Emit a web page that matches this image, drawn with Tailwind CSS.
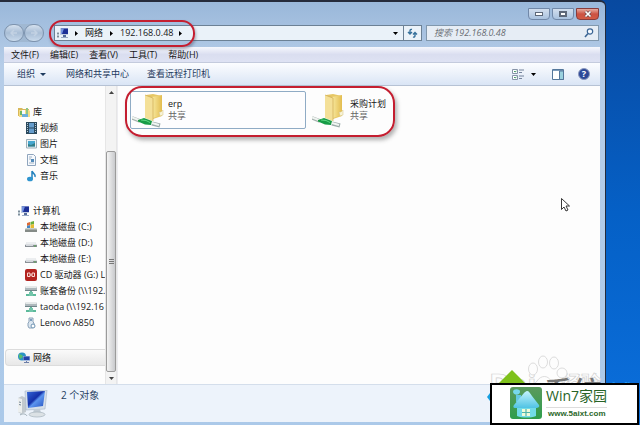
<!DOCTYPE html>
<html lang="zh-CN">
<head>
<meta charset="utf-8">
<meta name="viewport" content="width=device-width, initial-scale=1">
<title>192.168.0.48</title>
<script src="https://cdn.jsdelivr.net/npm/@tailwindcss/browser@4"></script>
</head>
<body class="relative flex h-screen overflow-hidden bg-linear-to-b from-[#0849a0] via-[#0560c6] to-[#0b6fdc] font-['Open_Sans','Noto_Sans_CJK_SC',sans-serif] text-[9px] leading-4 text-[#161616]">
<svg aria-hidden="true" class="absolute h-0 w-0">
  <defs>
    <linearGradient id="gold" x1="0" x2="1"><stop offset="0" stop-color="#f8e9a0"/><stop offset="1" stop-color="#e3bd50"/></linearGradient>
    <linearGradient id="screen" x1="0" x2="1" y1="0" y2="1"><stop offset="0" stop-color="#3568d8"/><stop offset=".45" stop-color="#1530a8"/><stop offset=".55" stop-color="#5c94ee"/><stop offset="1" stop-color="#2350c0"/></linearGradient>
    <linearGradient id="leaf" y1="0" y2="1" x1="0" x2="0"><stop offset="0" stop-color="#5b9a5c"/><stop offset="1" stop-color="#2e9d4c"/></linearGradient>
    <linearGradient id="roof" y1="0" y2="1" x1="0" x2="0"><stop offset="0" stop-color="#c4f3fb"/><stop offset="1" stop-color="#4fc3e4"/></linearGradient>
    <symbol id="computer" viewBox="0 0 12 12"><path d="M0 5h2v6H0z" fill="#b9c6ce"/><path d="M1 6v1m0 2v1" stroke="#456" /><path d="M3 1h8v7H3z" fill="#c0cbe0"/><path d="M4 1.500h7v5.500H4z" fill="#1c2f96"/><path d="M4 1.500h3L5 7H4z" fill="#7593df"/><path d="M6 8h3v2H6z" fill="#566b9b"/><path d="M4 10h7v1H4z" fill="#98a9c5"/></symbol>
    <symbol id="drive" viewBox="0 0 12 12"><path d="M2 5h8l2 3v2H0V8z" fill="#c7cbd0"/><path d="M2 5h8l1.500 2.500H.5z" fill="#eceef0"/><path d="M0 8h12v2H0z" fill="#8a9096"/><path d="M1 8.500h7" stroke="#d5d9dd"/><path d="M9 8.500h2v1H9z" fill="#58a84e"/></symbol>
    <symbol id="netdrive" viewBox="0 0 12 12"><path d="M1 1h10l1 2v3H0V3z" fill="#aeb8bc"/><path d="M1 1h10l.5 2H.5z" fill="#e5e9e9"/><path d="M0 5h12v1H0z" fill="#71868a"/><path d="M5 6h2v3H5z" fill="#69b7a0"/><path d="M1 9h10v2H1z" fill="#5cb99a"/><path d="M4 7h4v4H4z" fill="#72c5aa"/></symbol>
    <symbol id="share" viewBox="0 0 32 36"><path d="M14 3l7-1 9 2v20l-9 3z" fill="#e6c766"/><path d="M20 5l10-2v20l-9 3z" fill="url(#gold)"/><path d="M13 3l8 3v23l-8-3z" fill="#f4e098"/><path d="M13 3l8 3v23" fill="none" stroke="#cfa951" stroke-width=".7"/><path d="M27 20h2l2-2v5l-3 1z" fill="#f7f3d7" stroke="#d5c281" stroke-width=".5"/><path d="M0 26l8 3" stroke="#a4b0ac" stroke-width="3.500"/><path d="M0 25.500l8 3" stroke="#eff3f0" stroke-width="2"/><path d="M6 28l6-2 8 3-1 4-6-.5-7-3z" fill="#179c46"/><path d="M9 28l5 .5 4 2" stroke="#5bd681" fill="none"/><path d="M20 31.500l8 2" stroke="#9cabaa" stroke-width="4"/><path d="M20 31l7 2" stroke="#f0f5f2" stroke-width="2"/></symbol>
  </defs>
</svg>

<main class="relative flex min-w-0 flex-1 flex-col rounded-tr-md border-t-2 border-r border-[#252b3b] bg-linear-to-b from-[#9ab8da] via-[#b6cde8] via-15% to-[#abc9e9] pr-[5px] pb-[3px] pl-1">
  <header class="flex h-[23px] justify-end gap-[2px] pt-[6px] pr-px">
    <button aria-label="最小化" class="flex h-3 w-[22px] items-center justify-center rounded-b-sm border border-[#7188a8] bg-linear-to-b from-[#d2deee] to-[#a9c2df]"><span class="h-1 w-2 border border-[#5d6879] bg-white"></span></button>
    <button aria-label="最大化" class="flex h-3 w-[22px] items-center justify-center rounded-b-sm border border-[#7188a8] bg-linear-to-b from-[#d2deee] to-[#a9c2df]"><span class="h-[6px] w-2 border-2 border-[#5d6879] bg-white"></span></button>
    <button aria-label="关闭" class="flex h-3 w-[23px] items-center justify-center rounded-b-sm border border-[#893c3c] bg-linear-to-b from-[#e5aaa0] via-[#cc5142] to-[#d35a43]"><svg class="h-2 w-2" viewBox="0 0 8 8"><path d="M1.500 1.500l5 5m0-5l-5 5" stroke="#67464b" stroke-width="3"/><path d="M1.500 1.500l5 5m0-5l-5 5" stroke="#fff" stroke-width="1.700"/></svg></button>
  </header>

  <div class="flex h-[22px] items-start">
    <nav aria-label="导航" class="-mt-px mr-[10px] flex w-10 shrink-0 rounded-full bg-[#a0b8d2]">
      <button aria-label="后退" class="flex h-[18px] w-5 items-center justify-center rounded-full border border-[#7d93ae] bg-linear-to-b from-[#d4e0ee] via-[#a8bdd5] to-[#c9daec]"><svg class="h-2 w-2" viewBox="0 0 8 8"><path d="M7 4H1m3-3L1 4l3 3" fill="none" stroke="#c3d2e3" stroke-width="1.500"/></svg></button>
      <button aria-label="前进" class="flex h-[18px] w-5 items-center justify-center rounded-full border border-[#7d93ae] bg-linear-to-b from-[#d4e0ee] via-[#a8bdd5] to-[#c9daec]"><svg class="h-2 w-2" viewBox="0 0 8 8"><path d="M1 4h6M4 1l3 3-3 3" fill="none" stroke="#c3d2e3" stroke-width="1.500"/></svg></button>
    </nav>
    <div class="relative mr-1 flex h-4 flex-1 items-center border border-[#6c8195] bg-[#eaf2f9]">
      <svg class="mr-[6px] ml-[2px] h-3 w-3"><use href="#computer"/></svg>
      <svg class="mr-[7px] h-[5px] w-[3px]" viewBox="0 0 3 5"><path d="M0 0l3 2.500L0 5z"/></svg>
      <a href="#" class="leading-[14px]">网络</a>
      <svg class="mx-[7px] h-[5px] w-[3px]" viewBox="0 0 3 5"><path d="M0 0l3 2.500L0 5z"/></svg>
      <a href="#" class="leading-[14px]">192.168.0.48</a>
      <svg class="ml-[6px] h-[5px] w-[3px]" viewBox="0 0 3 5"><path d="M0 0l3 2.500L0 5z"/></svg>
      <button aria-label="历史地址" class="ml-auto flex h-full w-4 items-center justify-center"><svg class="h-[3px] w-[5px]" viewBox="0 0 5 3"><path d="M0 0h5L2.500 3z"/></svg></button>
      <button aria-label="刷新" class="flex h-full w-[18px] items-center justify-center border-l border-[#6c8195]"><svg class="h-[10px] w-[11px]" viewBox="0 0 11 10" fill="none" stroke="#35709b" stroke-width="1.400"><path d="M5 1.500Q3 1 3 3v2.500M1 4l2 2 2-2M6 9q2 .5 2-1.500V5M6 6.500l2-2 2 2"/></svg></button>
      <span class="pointer-events-none absolute -top-[6px] -left-[6px] z-10 h-[27px] w-[146px] rounded-[13px] border-2 border-[#c41e30] shadow-[1px_2px_3px_rgba(60,60,80,0.4)]"></span>
    </div>
    <label class="mr-px flex h-4 w-[173px] shrink-0 items-center border border-[#8198ad] bg-[#e6edf5] pr-1 pl-[7px]">
      <input aria-label="搜索" placeholder="搜索 192.168.0.48" class="min-w-0 flex-1 bg-transparent italic leading-[14px] outline-none placeholder:text-[#6b7076]">
      <svg class="h-[10px] w-[10px]" viewBox="0 0 10 10" fill="none"><circle cx="6" cy="3.500" r="2.700" fill="#f5faff" stroke="#3c6695" stroke-width="1.200"/><path d="M4 5.500L1 9" stroke="#3c6695" stroke-width="1.600"/></svg>
    </label>
  </div>

  <nav aria-label="菜单" class="flex h-4 items-center gap-[11px] border-b border-[#c4cbdd] bg-linear-to-b from-[#f6f8fd] via-[#dadef0] to-[#dee2f3] pl-[7px]">
    <button>文件(F)</button><button>编辑(E)</button><button>查看(V)</button><button>工具(T)</button><button>帮助(H)</button>
  </nav>

  <div class="flex h-[23px] items-center border-b border-[#b6c2d4] bg-linear-to-b from-[#fcfdff] to-[#dae5f5] pl-[13px] text-[#1f3b5e]">
    <button class="mr-5 flex items-center gap-[5px]">组织<svg class="h-[3px] w-[6px]" viewBox="0 0 6 3"><path d="M0 0h6L3 3z" fill="#1f3b5e"/></svg></button>
    <button class="mr-[18px]">网络和共享中心</button>
    <button>查看远程打印机</button>
    <button aria-label="更改视图" class="mr-4 ml-auto flex items-center gap-[7px]"><svg class="h-3 w-3" viewBox="0 0 12 12"><path d="M.5 1.500h5v4h-5zM.5 7.500h5v4h-5z" fill="#fff" stroke="#8794a8"/><path d="M2 3l1 1 1.500-1M2 9l1 1 1.500-1" fill="none" stroke="#496"/><path d="M7 2h5M7 4.500h3M7 8h5M7 10.500h3" stroke="#75839b"/></svg><svg class="h-[3px] w-[5px]" viewBox="0 0 5 3"><path d="M0 0h5L2.500 3z"/></svg></button>
    <button aria-label="预览窗格" class="mr-[14px]"><svg class="h-[11px] w-3" viewBox="0 0 12 11"><path d="M.5.5h11v10H.5z" fill="#fff" stroke="#54779b"/><path d="M1 1h10v1H1z" fill="#7d9cbc"/><path d="M7.500 2h4v8.500h-4z" fill="#9ad1de" stroke="#54779b"/></svg></button>
    <button aria-label="帮助" class="mr-[10px] h-3 w-3 rounded-full border border-[#8b98bd] bg-[#2c4898] text-center text-[9px] leading-[10px] font-bold text-white">?</button>
  </div>

  <div class="flex min-h-0 flex-1 bg-[#fdfdfd]">
    <aside class="w-[101px] shrink-0 overflow-hidden pt-[17px] whitespace-nowrap">
      <ul>
        <li class="flex h-[17px] items-center gap-[3px] pl-[14px]"><svg class="h-3 w-3 shrink-0" viewBox="0 0 12 12"><path d="M0 2h4l1 1h6v7H0z" fill="#d8b85a"/><path d="M1 4h10l1 1v6H1z" fill="#f3dc85"/><path d="M2 5h2v4H2z" fill="#69b867"/><path d="M4 4h3v4H4z" fill="#f8fafb"/><path d="M4 8h6v3H4z" fill="#6bb0dc"/><path d="M8 2h2v6H8z" fill="#8fc585"/></svg>库</li>
        <li class="flex h-4 items-center gap-[3px] pl-[22px]"><svg class="h-3 w-[11px] shrink-0" viewBox="0 0 11 12"><path d="M0 0h11v12H0z" fill="#2c4a5e"/><path d="M3 1h5v4.500H3zM3 6.500h5V11H3z" fill="#659ccc"/><path d="M1.500 1v10m8-10v10" stroke="#b7cad6" stroke-dasharray="1 1"/></svg>视频</li>
        <li class="flex h-4 items-center gap-[3px] pl-[22px]"><svg class="h-3 w-[11px] shrink-0" viewBox="0 0 11 12"><path d="M.5 1.500h10v8.500H.5z" fill="#eef3f4" stroke="#9caeb8"/><path d="M2 3h7v5.500H2z" fill="#47a7cf"/><path d="M2 6l3 1 4-2v3.500H2z" fill="#337d87"/></svg>图片</li>
        <li class="flex h-4 items-center gap-[3px] pl-[22px]"><svg class="h-3 w-[11px] shrink-0" viewBox="0 0 11 12"><path d="M1.500.5h6l2 2v9h-8z" fill="#f6f9fd" stroke="#8fa5bd"/><path d="M3 3h3M3 5h2M3 9h5" stroke="#a0b2c4"/><path d="M5 5h3v3H5z" fill="#538bb9"/></svg>文档</li>
        <li class="flex h-4 items-center gap-[3px] pl-[22px]"><svg class="h-3 w-[11px] shrink-0" viewBox="0 0 11 12"><path d="M6 1v8M6 1c1 3 4 3 3 6" fill="none" stroke="#2381bd" stroke-width="1.500"/><ellipse cx="4" cy="9" rx="3" ry="2.300" fill="#2f95cf"/></svg>音乐</li>
      </ul>
      <ul class="mt-[18px]">
        <li class="flex h-[17px] items-center gap-[3px] pl-[14px]"><svg class="h-3 w-3 shrink-0"><use href="#computer"/></svg>计算机</li>
        <li class="flex h-4 items-center gap-[3px] pl-[21px]"><svg class="h-3 w-3 shrink-0" viewBox="0 0 12 12"><path d="M1 7h10l1 2v2H0V9z" fill="#858b87"/><path d="M1 7h10l.5 1.500H.5z" fill="#c9cfc9"/><path d="M2 2l3-1v3L2 5z" fill="#dd6a33"/><path d="M5.500 1L9 0v3l-3.500 1z" fill="#6aae3c"/><path d="M2 5l3-1v3H2z" fill="#4385c5"/><path d="M5.500 4L9 3v4H5.500z" fill="#e6bb31"/></svg>本地磁盘 (C:)</li>
        <li class="flex h-4 items-center gap-[3px] pl-[21px]"><svg class="h-3 w-3 shrink-0"><use href="#drive"/></svg>本地磁盘 (D:)</li>
        <li class="flex h-4 items-center gap-[3px] pl-[21px]"><svg class="h-3 w-3 shrink-0"><use href="#drive"/></svg>本地磁盘 (E:)</li>
        <li class="flex h-4 items-center gap-[3px] pl-[21px]"><svg class="h-3 w-3 shrink-0" viewBox="0 0 12 12"><rect width="12" height="12" rx="2" fill="#b3231f"/><path d="M5 4H2.500v3.500H5zM7 4h2.500v3.500H7zM5 6h2" fill="none" stroke="#fbd9d4"/></svg>CD 驱动器 (G:) L</li>
        <li class="flex h-4 items-center gap-[3px] pl-[21px]"><svg class="h-3 w-3 shrink-0"><use href="#netdrive"/></svg>账套备份 (\\192.</li>
        <li class="flex h-4 items-center gap-[3px] pl-[21px]"><svg class="h-3 w-3 shrink-0"><use href="#netdrive"/></svg>taoda (\\192.16</li>
        <li class="flex h-4 items-center gap-[3px] pl-[21px]"><svg class="h-3 w-3 shrink-0" viewBox="0 0 12 12"><path d="M4 1h4v4l1 1v4l-2 1H4L3 9V6l1-1z" fill="#dce7f1" stroke="#8ba2b8"/><circle cx="6" cy="3" r="1" fill="#5c84ac"/><circle cx="8" cy="9" r="2" fill="#fff" stroke="#6d92b2"/></svg>Lenovo A850</li>
      </ul>
      <ul class="mt-[18px]">
        <li class="ml-px flex h-[17px] items-center gap-[3px] rounded-l-sm border border-r-0 border-[#dcdcdc] bg-linear-to-b from-[#fafafa] to-[#e8e8e8] pl-3"><svg class="h-3 w-3 shrink-0" viewBox="0 0 12 12"><circle cx="4" cy="4.500" r="4" fill="#2b93c4"/><path d="M1 2l3 1 1 2-3 2-1-2z" fill="#59bd6c"/><path d="M5 4h7v5H5z" fill="#a9bde2"/><path d="M5.500 4.500h6V8h-6z" fill="#2443a8"/><path d="M8 9h1v1h2v1H6v-1h2z" fill="#6d7fa8"/></svg>网络</li>
      </ul>
    </aside>
    <div class="flex w-3 shrink-0 flex-col items-center border-x border-[#e6e6e6] bg-[#f3f3f3]">
      <svg class="mt-[5px] h-[3px] w-[5px] shrink-0" viewBox="0 0 5 3"><path d="M0 3h5L2.500 0z" fill="#444"/></svg>
      <div class="mt-[57px] mb-[5px] flex w-full flex-1 flex-col items-center justify-center gap-px rounded-xs border border-[#9b9b9b] bg-linear-to-r from-[#f4f4f4] to-[#c9cacd]"><i class="h-px w-[5px] bg-[#777]"></i><i class="h-px w-[5px] bg-[#777]"></i><i class="h-px w-[5px] bg-[#777]"></i></div>
      <svg class="mb-1 h-[3px] w-[5px] shrink-0" viewBox="0 0 5 3"><path d="M0 0h5L2.500 3z" fill="#444"/></svg>
    </div>
    <section aria-label="文件" class="flex-1 border-l border-[#ececf0] pt-[5px] pl-3">
      <div class="relative flex w-min">
        <span class="pointer-events-none absolute -top-[5px] -left-[5px] h-[51px] w-[270px] rounded-[17px] border-2 border-[#c41e30] shadow-[2px_3px_4px_rgba(60,60,60,0.4)]"></span>
        <a href="#" class="flex h-[38px] w-[176px] shrink-0 items-center rounded-xs border border-[#8fabc5] bg-[#fdfdfe] pl-px"><svg class="mr-1 h-9 w-8"><use href="#share"/></svg><span class="flex flex-col leading-3"><span>erp</span><span class="text-[#666]">共享</span></span></a>
        <a href="#" class="flex h-[38px] w-[88px] shrink-0 items-center pl-[6px]"><svg class="mr-[6px] h-9 w-8"><use href="#share"/></svg><span class="flex flex-col leading-3"><span>采购计划</span><span class="text-[#666]">共享</span></span></a>
      </div>
    </section>
  </div>

  <footer class="flex h-[38px] shrink-0 border-t border-[#d4deeb] bg-[#edf3fb] pl-[13px] text-[#26405f]">
    <svg class="mt-[5px] mr-3 h-7 w-8" viewBox="0 0 32 28"><path d="M1 8l4-2 4 2v14l-5 2-3-2z" fill="#c2c9ce"/><path d="M1 8l4 1v14l-4-1z" fill="#ecefef"/><path d="M2 12l2 .5m-2 2l2 .5" stroke="#789"/><path d="M8 1l22-1-2 19-19 1z" fill="#d6dfe9" stroke="#a5b4c7" stroke-width=".6"/><path d="M10 2l18-1-2 15-15 2z" fill="url(#screen)"/><path d="M17 19h6l1 4h-8z" fill="#c1cbd4"/><ellipse cx="20" cy="24.500" rx="8" ry="2.500" fill="#dbe1e5" stroke="#a5b1bb" stroke-width=".7"/><path d="M3 25c3-2 6-1 7 1" stroke="#9eacb5" fill="none"/></svg>
    <p class="mt-[2px] text-[10px]">2 个对象</p>
  </footer>

  <svg aria-hidden="true" class="absolute right-[35px] bottom-[213px] h-[14px] w-[9px]" viewBox="0 0 9 14"><path d="M.5.500v11l2.500-2.500 2 4 2-1-2-4h3.500z" fill="#fff" stroke="#222" stroke-width=".9"/></svg>
</main>
<div class="w-[34px] shrink-0"></div>

<div class="pointer-events-none absolute right-0 bottom-0 h-[72px] w-[155px] overflow-hidden">
  <svg aria-hidden="true" class="h-full w-full font-['Open_Sans','Noto_Sans_CJK_SC',sans-serif]" viewBox="0 0 155 72">
    <g fill="#fdfdfd" stroke="#cfcfcf" stroke-width=".7"><text x="4" y="43" font-size="30" font-weight="700">Bai</text><text x="76" y="38" font-size="20" font-weight="700">经验</text><path d="M43 43c-2-9 6-10 9-15 4-6 11-6 14 0 3 4 8 6 6 15z"/><ellipse cx="48" cy="16" rx="4.500" ry="6"/><ellipse cx="58" cy="9" rx="4.500" ry="6"/><ellipse cx="69" cy="10" rx="4.500" ry="6"/><ellipse cx="77" cy="20" rx="5" ry="5"/></g>
    <path d="M27 17l14 14-14 14-14-14z" fill="#7fc11c"/>
    <path d="M8 36v16l-6-8z" fill="#159fe0"/>
    <text x="59" y="50" font-size="29" font-weight="500" fill="#777">系统</text><text x="124" y="50" font-size="24" font-weight="500" fill="#249bf2">城</text>
  </svg>
</div>
<a href="#" class="absolute right-px bottom-0 flex h-[42px] w-[149px] border-2 border-black bg-white pl-[18px]">
  <svg class="mt-[2px] mr-1 h-8 w-8 shrink-0" viewBox="0 0 32 32"><rect width="32" height="32" rx="3" fill="url(#leaf)"/><path d="M3 5c0-4 8-3 7 0 0 3-6 4-7 0z" fill="#77d8ea"/><path d="M6 8h5v7H6z" fill="#65c8df"/><path d="M17 4c2 0 3 2 5 5l7 9c1 2-1 3-3 3H5c-2 0-2-2-1-3L14 6c1-1 2-2 3-2z" fill="url(#roof)"/><path d="M7 21h19v8c-5 2-14 2-19 0z" fill="#72dbe8"/><path d="M12 22h8v7h-8z" fill="#effcda"/><path d="M16 22v7m-4-3.500h8" stroke="#4fb5ac" stroke-width="1.200"/></svg>
  <span class="flex flex-col"><span class="text-[14px] leading-[22px] text-[#276326]">Win7家园</span><span class="border-t border-[#ddd] pl-[2px] font-['Liberation_Sans',sans-serif] text-[8px] leading-[11px] font-bold text-[#2c682b]">www.5aixt.com</span></span>
</a>
</body>
</html>
